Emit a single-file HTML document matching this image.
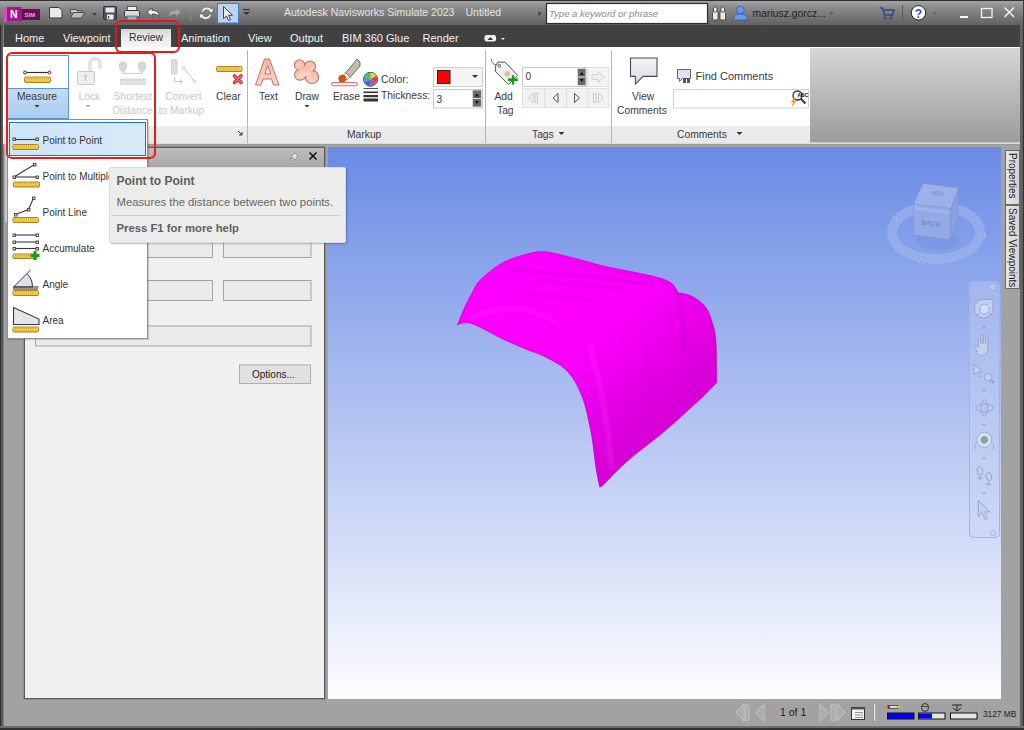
<!DOCTYPE html>
<html><head><meta charset="utf-8">
<style>
*{margin:0;padding:0;box-sizing:border-box}
html,body{width:1024px;height:730px;overflow:hidden;background:#2b2b2b;font-family:"Liberation Sans",sans-serif}
.a{position:absolute}
#title{left:0;top:0;width:1024px;height:25px;background:linear-gradient(#2e2e2e 0,#2e2e2e 1px,#a4a4a4 1px,#8a8a8a 8px,#626262 25px)}
#tabs{left:0;top:25px;width:1024px;height:22px;background:#414141}
#ribbon{left:3px;top:47px;width:1017px;height:96px;background:#fff}
#ribgray{left:810px;top:48px;width:210px;height:95px;background:linear-gradient(#d6d6d6 0,#9c9c9c 94px,#c8c8c8 94px)}
#foot{left:3px;top:126px;width:807px;height:17px;background:linear-gradient(#ededed,#e8e8e8)}
#main{left:4px;top:143px;width:1016px;height:583px;background:#a2a2a2}
#band{left:3px;top:143px;width:1017px;height:4px;background:linear-gradient(#dcdcdc 0,#dcdcdc 0.5px,#959595 1px,#a0a0a0 2px,#a8a8a8 4px)}
#lframe{left:0;top:25px;width:4px;height:705px;background:linear-gradient(90deg,#303030 0,#303030 1.2px,#555 1.5px,#5a5a5a 2.5px,#777 3px,#858585 4px)}
#rframe{left:1020px;top:25px;width:4px;height:705px;background:linear-gradient(90deg,#666 0,#5e5e5e 2.5px,#333 3px)}
#bframe{left:0;top:726px;width:1024px;height:4px;background:linear-gradient(#727272 0,#6a6a6a 2px,#363636 2.5px,#2e2e2e)}
#vp{left:328px;top:147px;width:673px;height:552px;background:linear-gradient(#6a8be5,#fdfdff)}
#panel{left:24px;top:147px;width:301px;height:552px;background:#f0f0f0;border:1px solid #5a5a5a;box-shadow:0 0 0 0.6px #808080}
#phead{left:0;top:0;width:299px;height:19px;background:linear-gradient(#bebebe,#a8a8a8)}
.txt{white-space:nowrap;color:#333}
</style></head><body>
<div id="title" class="a"></div>
<div class="a" style="left:1023px;top:0;width:1px;height:25px;background:#3a3a3a"></div>
<div id="tabs" class="a"></div>
<!-- TITLE BAR CONTENT -->
<svg class="a" style="left:0;top:0" width="1024" height="25">
 <polygon points="3.5,9 7,7 7,21 3.5,23" fill="#d94fb5"/>
 <rect x="7" y="7" width="14.5" height="14" fill="#a3168e"/>
 <rect x="21.5" y="9" width="18.5" height="11" fill="#6f0b55"/>
 <text x="10" y="18" font-family="Liberation Sans" font-weight="bold" font-size="10.5" fill="#fff">N</text>
 <text x="24.5" y="17" font-family="Liberation Sans" font-weight="bold" font-size="6" fill="#e0b8d8">SIM</text>
 <!-- new doc -->
 <path d="M49.5,7.5 h9.5 l3,3 v7.5 h-12.5z" fill="#e8eaee" stroke="#3a3a3a" stroke-width="1"/>
 <!-- open folder -->
 <path d="M70.5,9.5 h5 l1.5,1.5 h5 v2 h-11.5z" fill="#c8ccd4" stroke="#3a3a3a" stroke-width="0.8"/>
 <path d="M70.5,18 l3,-5.5 h11 l-3,5.5z" fill="#b8bec8" stroke="#3a3a3a" stroke-width="0.8"/>
 <path d="M92,13 h5 l-2.5,2.5z" fill="#3a3a3a"/>
 <!-- save -->
 <rect x="103.5" y="6.5" width="13" height="13" rx="1" fill="#4a5060" stroke="#2a2e38" stroke-width="1"/>
 <rect x="105.5" y="7.5" width="9" height="5" fill="#e8e8e8"/>
 <rect x="107" y="14.5" width="6.5" height="5" fill="#f0f0f0"/>
 <rect x="108" y="16" width="1.2" height="2.5" fill="#333"/>
 <!-- print -->
 <rect x="127.5" y="6.5" width="9" height="4" fill="#f0f0f0" stroke="#444" stroke-width="0.8"/>
 <rect x="124.5" y="10.5" width="15" height="6.5" rx="1" fill="#d8dadc" stroke="#333" stroke-width="1"/>
 <rect x="127" y="16" width="10" height="4" fill="#8ab0c8" stroke="#444" stroke-width="0.6"/>
 <!-- undo -->
 <path d="M147,12 l5,-4 v2.5 c4,0 7,1 7,6 c-1.5,-2 -3.5,-2.5 -7,-2.5 v2.5z" fill="#f4f4f4" stroke="#444" stroke-width="0.9"/>
 <!-- redo -->
 <path d="M181,12 l-5,-4 v2.5 c-4,0 -7,1 -7,6 c1.5,-2 3.5,-2.5 7,-2.5 v2.5z" fill="#a8a8a8" stroke="#888" stroke-width="0.6"/>
 <line x1="190.5" y1="5" x2="190.5" y2="21" stroke="#8a8a8a" stroke-width="1"/>
 <!-- refresh -->
 <path d="M201,12.5 a6,6 0 0 1 10.5,-3.5 l1.5,-1.5 v5 h-5 l1.6,-1.6 a4,4 0 0 0 -6.6,1.6z" fill="#f0f0f0" stroke="#555" stroke-width="0.6"/>
 <path d="M211.5,14 a6,6 0 0 1 -10.5,3.5 l-1.5,1.5 v-5 h5 l-1.6,1.6 a4,4 0 0 0 6.6,-1.6z" fill="#f0f0f0" stroke="#555" stroke-width="0.6"/>
 <!-- select -->
 <rect x="217.5" y="3.5" width="21" height="19.5" fill="#b8d4f0" stroke="#3a7ac8" stroke-width="1"/>
 <path d="M223.5,6.5 v12 l3,-2.5 l2,4.5 l2,-1 l-2,-4.2 h4z" fill="#e8ecf0" stroke="#333" stroke-width="0.9"/>
 <rect x="243" y="9" width="7" height="1.2" fill="#333"/>
 <path d="M243,12 h7 l-3.5,3z" fill="#333"/>
 <!-- search arrow -->
 <path d="M538.5,11 l3,2.5 l-3,2.5z" fill="#3a3a3a"/>
 <rect x="546.5" y="3.5" width="161" height="20" fill="#fff" stroke="#2e2e2e" stroke-width="1.2"/>
 <!-- binoculars -->
 <g fill="#e8e8e8" stroke="#333" stroke-width="0.8">
  <rect x="712.5" y="11" width="5.5" height="9" rx="1"/><rect x="720" y="11" width="5.5" height="9" rx="1"/>
  <rect x="713.5" y="7" width="3.5" height="5" rx="1"/><rect x="721" y="7" width="3.5" height="5" rx="1"/>
 </g>
 <!-- user -->
 <circle cx="740.5" cy="10" r="3.8" fill="#6a9ae8" stroke="#2a5ab8" stroke-width="0.8"/>
 <path d="M733.5,20 c0,-4 3,-6 7,-6 s7,2 7,6z" fill="#6a9ae8" stroke="#2a5ab8" stroke-width="0.8"/>
 <path d="M829.5,12.5 h4 l-2,2z" fill="#4a4a4a"/>
 <!-- cart -->
 <path d="M879.5,8 h3 l2,7 h8 l1.5,-5 h-10" fill="none" stroke="#2a4a8a" stroke-width="1.6"/>
 <circle cx="885" cy="18" r="1.5" fill="#2a4a8a"/><circle cx="891" cy="18" r="1.5" fill="#2a4a8a"/>
 <line x1="902.5" y1="5" x2="902.5" y2="21" stroke="#5a5a5a" stroke-width="1"/>
 <!-- help -->
 <circle cx="918.5" cy="12.8" r="7.2" fill="#fff" stroke="#222" stroke-width="1"/>
 <text x="914.8" y="17.5" font-family="Liberation Sans" font-weight="bold" font-size="12" fill="#2a50c8">?</text>
 <path d="M932.5,12.5 h4 l-2,2z" fill="#5a5a5a"/>
 <!-- window buttons -->
 <rect x="960" y="16" width="8" height="2" fill="#f4f4f4"/>
 <rect x="981.5" y="8.5" width="10.5" height="9" fill="none" stroke="#f4f4f4" stroke-width="1.3"/>
 <path d="M1004.5,7.5 l9.5,9.5 M1014,7.5 l-9.5,9.5" stroke="#f4f4f4" stroke-width="1.5"/>
</svg>
<div class="a txt" style="left:284px;top:6px;font-size:10.5px;color:#e4e4e4">Autodesk Navisworks Simulate 2023</div>
<div class="a txt" style="left:465.5px;top:6px;font-size:10.5px;color:#e4e4e4">Untitled</div>
<div class="a txt" style="left:549px;top:7.5px;font-size:9.5px;color:#8a8a8a;font-style:italic">Type a keyword or phrase</div>
<div class="a txt" style="left:752.5px;top:7.5px;font-size:10.4px;color:#1e1e1e">mariusz.gorcz...</div>


<!-- TABS -->
<div class="a" style="left:121px;top:29px;width:49.5px;height:18px;background:linear-gradient(#d4d4d4,#e8e8e8 40%,#f6f6f6)"></div>
<div class="a txt" style="left:15px;top:31.5px;font-size:11px;color:#f2f2f2">Home</div>
<div class="a txt" style="left:63px;top:31.5px;font-size:11px;color:#f2f2f2">Viewpoint</div>
<div class="a txt" style="left:129px;top:31.5px;font-size:10.4px;color:#2e2e2e">Review</div>
<div class="a txt" style="left:181px;top:31.5px;font-size:11px;color:#f2f2f2">Animation</div>
<div class="a txt" style="left:248px;top:31.5px;font-size:11px;color:#f2f2f2">View</div>
<div class="a txt" style="left:290px;top:31.5px;font-size:11px;color:#f2f2f2">Output</div>
<div class="a txt" style="left:342px;top:31.5px;font-size:11px;color:#f2f2f2">BIM 360 Glue</div>
<div class="a txt" style="left:422.5px;top:31.5px;font-size:11px;color:#f2f2f2">Render</div>
<svg class="a" style="left:480px;top:30px" width="30" height="15">
 <rect x="4.5" y="5" width="11.5" height="6.5" rx="2" fill="#f0f0f0"/>
 <path d="M7.5,10 l2.8,-3 l2.8,3z" fill="#333"/>
 <path d="M21,8 h4 l-2,2z" fill="#f0f0f0"/>
</svg>
<div id="lframe" class="a"></div>
<div id="rframe" class="a"></div>
<div id="main" class="a"></div>
<div id="band" class="a"></div>
<div class="a" style="left:3.5px;top:144px;width:4px;height:78px;background:linear-gradient(90deg,#8a8a8a,#c4c4c4 1px,#d0d0d0)"></div>
<div id="ribbon" class="a"></div>
<div id="foot" class="a"></div>
<div id="ribgray" class="a"></div>

<!-- RIBBON CONTENT -->
<div class="a" style="left:7px;top:55px;width:61.5px;height:64px;border:1px solid #5a94d4;background:linear-gradient(#ffffff 0,#ffffff 32px,#5a94d4 32px,#5a94d4 33px,#c4dcf4 33px,#a9cbee 100%)"></div>
<svg class="a" style="left:0;top:47px" width="810" height="96">
 <defs>
  <linearGradient id="rul" x1="0" y1="0" x2="0" y2="1"><stop offset="0" stop-color="#ffe676"/><stop offset="1" stop-color="#e8b820"/></linearGradient>
  <linearGradient id="pink" x1="0" y1="0" x2="0" y2="1"><stop offset="0" stop-color="#f4b8a4"/><stop offset="1" stop-color="#f8d8cc"/></linearGradient>
 </defs>
 <!-- measure icon -->
 <line x1="25" y1="25.5" x2="49.5" y2="25.5" stroke="#333" stroke-width="1.2"/>
 <circle cx="25" cy="25.5" r="1.5" fill="#ddd" stroke="#333" stroke-width="0.9"/>
 <circle cx="49.5" cy="25.5" r="1.5" fill="#ddd" stroke="#333" stroke-width="0.9"/>
 <rect x="24.5" y="30" width="26" height="5.5" rx="1.2" fill="url(#rul)" stroke="#a8741a" stroke-width="0.9"/><line x1="26.5" y1="31.8" x2="49" y2="31.8" stroke="#b88a20" stroke-width="1.6" stroke-dasharray="0.8,1.4"/>
 <path d="M34.5,58 h5 l-2.5,2.5z" fill="#333"/>
 <!-- lock (disabled) -->
 <path d="M90,24 v-7.5 a5,5 0 0 1 10,0 v5" fill="none" stroke="#d0d0d0" stroke-width="3"/>
 <path d="M90,24 v-7.5 a5,5 0 0 1 10,0 v5" fill="none" stroke="#f0f0f0" stroke-width="1.2"/>
 <rect x="77.5" y="24.5" width="17" height="13" rx="1" fill="#eeeeee" stroke="#c8c8c8" stroke-width="1"/>
 <circle cx="85.5" cy="29" r="1.3" fill="#c0c0c0"/><rect x="85" y="29" width="1.2" height="5" fill="#c0c0c0"/>
 <path d="M85.5,58 h5 l-2.5,2.5z" fill="#aaa"/>
 <!-- shortest distance (disabled) -->
 <path d="M123,26 c-3,-3 -3.8,-5.5 -3.8,-7.5 a3.8,3.8 0 0 1 7.6,0 c0,2 -0.8,4.5 -3.8,7.5z" fill="#d8d8d8" stroke="#cccccc" stroke-width="0.8"/>
 <path d="M142,26 c-3,-3 -3.8,-5.5 -3.8,-7.5 a3.8,3.8 0 0 1 7.6,0 c0,2 -0.8,4.5 -3.8,7.5z" fill="#d8d8d8" stroke="#cccccc" stroke-width="0.8"/>
 <path d="M123,26.5 h19" stroke="#cfcfcf" stroke-width="1"/>
 <rect x="120.5" y="32" width="25" height="5.5" fill="#e4e4e4" stroke="#d0d0d0" stroke-width="0.8"/><line x1="122.5" y1="33.6" x2="144" y2="33.6" stroke="#c8c8c8" stroke-width="1.4" stroke-dasharray="0.8,1.6"/>
 <!-- convert to markup (disabled) -->
 <rect x="171.5" y="12.5" width="5.5" height="14.5" rx="1" fill="#dcdcdc" stroke="#cacaca" stroke-width="0.8"/>
 <path d="M174.5,30 v4.5 h6" fill="none" stroke="#c8c8c8" stroke-width="1.2"/>
 <path d="M180,32 l3,2.5 l-3,2.5z" fill="#c8c8c8"/>
 <line x1="183.5" y1="20.5" x2="194.5" y2="34.5" stroke="#cfcfcf" stroke-width="1.2"/>
 <rect x="182.5" y="19.5" width="2" height="2" fill="#fff" stroke="#c8c8c8" stroke-width="0.7"/>
 <rect x="193.5" y="33.5" width="2" height="2" fill="#fff" stroke="#c8c8c8" stroke-width="0.7"/>
 <!-- clear -->
 <rect x="216.5" y="19.5" width="25.5" height="5" rx="1" fill="url(#rul)" stroke="#a8741a" stroke-width="0.9"/><line x1="218.5" y1="21.2" x2="240.5" y2="21.2" stroke="#b88a20" stroke-width="1.6" stroke-dasharray="0.8,1.4"/>
 <path d="M234.5,29 l6.5,6.5 M241,29 l-6.5,6.5" stroke="#a83030" stroke-width="3.6" stroke-linecap="round"/>
 <path d="M234.5,29 l6.5,6.5 M241,29 l-6.5,6.5" stroke="#f06060" stroke-width="2" stroke-linecap="round"/>
 <line x1="247.5" y1="3" x2="247.5" y2="96" stroke="#b4b4b4" stroke-width="1"/>
 <!-- Text A -->
 <path d="M255.5,38 l9,-26 h5 l9.5,26 h-5.5 l-2,-6 h-8.5 l-2,6z M265,27 h5.5 l-2.8,-8.5z" fill="url(#pink)" stroke="#c46c64" stroke-width="1" fill-rule="evenodd"/>
 <!-- Draw cloud -->
 <g fill="#b86a64"><circle cx="299.5" cy="17.9" r="5.6"/><circle cx="310" cy="19.5" r="6.1"/><circle cx="300.2" cy="27.7" r="6.1"/><circle cx="312" cy="30" r="7.1"/></g>
 <g fill="url(#pink)"><circle cx="299.5" cy="17.9" r="4.6"/><circle cx="310" cy="19.5" r="5.1"/><circle cx="300.2" cy="27.7" r="5.1"/><circle cx="312" cy="30" r="6.1"/><rect x="299" y="19" width="12" height="10"/></g>
 <path d="M304.5,58 h5 l-2.5,2.5z" fill="#333"/>
 <!-- Erase brush -->
 <path d="M345.5,26 l11.5,-14 l3,3 v4 l-10.5,12z" fill="#c4bca8" stroke="#555" stroke-width="0.8"/>
 <path d="M342.5,29 l3,-3.5 l4.5,4.5 l-3,3z" fill="#e8e8e8" stroke="#555" stroke-width="0.6"/>
 <circle cx="342.3" cy="31.6" r="3.6" fill="#e8500a" stroke="#8a3a10" stroke-width="0.5"/>
 <rect x="331.5" y="35.5" width="26" height="3.3" rx="1.6" fill="#fae8e8" stroke="#b85a5a" stroke-width="0.8"/>
 <!-- color wheel -->
 <circle cx="370.5" cy="32.3" r="7" fill="#ddd" stroke="#444" stroke-width="1"/>
 <path d="M370.5,32.3 l0,-6.5 a6.5,6.5 0 0 1 5.6,3.25z" fill="#e0d840"/>
 <path d="M370.5,32.3 l5.6,-3.25 a6.5,6.5 0 0 1 0,6.5z" fill="#e04040"/>
 <path d="M370.5,32.3 l5.6,3.25 a6.5,6.5 0 0 1 -5.6,3.25z" fill="#b050b0"/>
 <path d="M370.5,32.3 l0,6.5 a6.5,6.5 0 0 1 -5.6,-3.25z" fill="#4060e0"/>
 <path d="M370.5,32.3 l-5.6,3.25 a6.5,6.5 0 0 1 0,-6.5z" fill="#40a0e0"/>
 <path d="M370.5,32.3 l-5.6,-3.25 a6.5,6.5 0 0 1 5.6,-3.25z" fill="#50c050"/>
 <!-- thickness -->
 <rect x="363.5" y="41" width="14.5" height="1" fill="#555"/>
 <rect x="363.5" y="44.5" width="14.5" height="1.6" fill="#333"/>
 <rect x="363.5" y="48" width="14.5" height="2.2" fill="#333"/>
 <rect x="363.5" y="51.5" width="14.5" height="3" fill="#333"/>
 <!-- color dropdown -->
 <rect x="433.5" y="20.5" width="49" height="19" fill="#f4f4f4" stroke="#d0d0d0" stroke-width="1"/>
 <rect x="437.5" y="23.5" width="12.5" height="13" fill="#ff0000" stroke="#222" stroke-width="1"/>
 <path d="M472,28 h6 l-3,3z" fill="#333"/>
 <!-- thickness spin -->
 <rect x="433.5" y="42.5" width="49" height="18.5" fill="#fff" stroke="#c8c8c8" stroke-width="1"/>
 <rect x="472" y="43" width="10" height="17.5" fill="#d8d8d8"/>
 <rect x="473" y="43.5" width="8" height="7.5" fill="#6a6a6a"/>
 <rect x="473" y="52" width="8" height="7.5" fill="#6a6a6a"/>
 <path d="M475,49.5 h4 l-2,-3z M475,54 h4 l-2,3z" fill="#111"/>
 <line x1="485.5" y1="3" x2="485.5" y2="96" stroke="#b4b4b4" stroke-width="1"/>
 <!-- add tag -->
 <path d="M491.2,11.7 c0.5,3 1.5,5 3,5.5 s3,1 5,1.5" fill="none" stroke="#555" stroke-width="0.9"/>
 <path d="M497.8,15.1 h7.2 l12.8,13.4 l-9.4,9.1 l-13,-13.1 v-5.4z" fill="#eceef2" stroke="#444" stroke-width="0.9"/>
 <circle cx="499.2" cy="18.8" r="1.4" fill="#ddd" stroke="#555" stroke-width="0.8"/>
 <path d="M507.2,23.3 l3.5,3.4 l-3,3.5 l-3.9,-3z" fill="#f0b4a0"/>
 <rect x="511.9" y="28.2" width="2.3" height="9.4" fill="#10a010"/>
 <rect x="508" y="31.4" width="9.8" height="2.7" fill="#10a010"/>
 <!-- tag input -->
 <rect x="522.5" y="20.5" width="64.5" height="19" fill="#fff" stroke="#c8c8c8" stroke-width="1"/>
 <rect x="577" y="21" width="9.5" height="18" fill="#d8d8d8"/>
 <rect x="578" y="22" width="7.5" height="7.5" fill="#6a6a6a"/>
 <rect x="578" y="30.5" width="7.5" height="7.5" fill="#6a6a6a"/>
 <path d="M579.8,28 h4 l-2,-3z M579.8,32 h4 l-2,3z" fill="#111"/>
 <rect x="588" y="20.5" width="21" height="19" fill="#f4f4f4" stroke="#e0e0e0" stroke-width="1"/>
 <path d="M592,27.5 h6 v-3 l6,5.5 l-6,5.5 v-3 h-6z" fill="#f0f0f0" stroke="#c8c8c8" stroke-width="0.8"/>
 <!-- nav buttons -->
 <rect x="522.5" y="41.5" width="86.5" height="19" fill="#f2f2f2" stroke="#e0e0e0" stroke-width="1"/>
 <line x1="544.5" y1="42" x2="544.5" y2="60.5" stroke="#e0e0e0"/>
 <line x1="566.5" y1="42" x2="566.5" y2="60.5" stroke="#e0e0e0"/>
 <line x1="588.5" y1="42" x2="588.5" y2="60.5" stroke="#e0e0e0"/>
 <path d="M533,46.5 l-4.5,4.5 l4.5,4.5z" fill="#f4f4f4" stroke="#c4c4c4" stroke-width="0.9"/>
 <rect x="535" y="46.5" width="2.5" height="9" fill="#f4f4f4" stroke="#c4c4c4" stroke-width="0.9"/>
 <path d="M558,46.5 l-5,4.5 l5,4.5z" fill="#f4f4f4" stroke="#555" stroke-width="1"/>
 <path d="M574.5,46.5 l5,4.5 l-5,4.5z" fill="#f4f4f4" stroke="#555" stroke-width="1"/>
 <rect x="593.5" y="46.5" width="2.5" height="9" fill="#f4f4f4" stroke="#c4c4c4" stroke-width="0.9"/>
 <path d="M598.5,46.5 l4.5,4.5 l-4.5,4.5z" fill="#f4f4f4" stroke="#c4c4c4" stroke-width="0.9"/>
 <line x1="611.5" y1="3" x2="611.5" y2="96" stroke="#b4b4b4" stroke-width="1"/>
 <!-- view comments bubble -->
 <defs><linearGradient id="bub" x1="0" y1="0" x2="0" y2="1"><stop offset="0" stop-color="#f4f5f8"/><stop offset="1" stop-color="#d8dbe2"/></linearGradient></defs><path d="M630.5,11 h26.5 v18.4 h-14 l-7.6,7.8 v-7.8 h-4.9z" fill="url(#bub)" stroke="#4a4a4a" stroke-width="1.1" stroke-linejoin="round"/>
 <!-- find comments icon -->
 <path d="M677.5,22.5 h13 v9 h-8 l-3,3 v-3 h-2z" fill="#e0e4ea" stroke="#555" stroke-width="0.9"/>
 <rect x="683" y="31" width="3" height="5" fill="#3a5a9a"/><rect x="687" y="31" width="3" height="5" fill="#3a5a9a"/>
 <!-- search box -->
 <rect x="673.5" y="42.5" width="135" height="18.5" fill="#fff" stroke="#d0d0d0" stroke-width="1"/>
 <circle cx="797.5" cy="48.5" r="4.5" fill="#f4f4f4" stroke="#333" stroke-width="1.3"/>
 <line x1="800.5" y1="51.5" x2="805.5" y2="56.5" stroke="#444" stroke-width="2.4"/>
 <path d="M795,51 l-3,3.5 h3 l-3,4" fill="none" stroke="#f0a010" stroke-width="1.3"/>
 <text x="797.5" y="50" font-family="Liberation Sans" font-size="5" font-weight="bold" fill="#111">ABC</text>
 <!-- dialog launcher -->
 <path d="M238,84 l4,4 M242,85 v3 h-3" stroke="#333" stroke-width="1" fill="none"/>
 <path d="M558.5,85 h6 l-3,3z" fill="#333"/>
 <path d="M736.5,85 h6 l-3,3z" fill="#333"/>
</svg>
<div class="a txt" style="left:17px;top:90.5px;font-size:10.3px;color:#3a3a3a">Measure</div>
<div class="a txt" style="left:78.5px;top:90.5px;font-size:10.3px;color:#c8c8c8">Lock</div>
<div class="a txt" style="left:113.5px;top:90.5px;font-size:10.3px;color:#c8c8c8">Shortest</div>
<div class="a txt" style="left:112.5px;top:104.5px;font-size:10.3px;color:#c8c8c8">Distance</div>
<div class="a txt" style="left:165.5px;top:90.5px;font-size:10.3px;color:#c8c8c8">Convert</div>
<div class="a txt" style="left:158.5px;top:104.5px;font-size:10.3px;color:#c8c8c8">to Markup</div>
<div class="a txt" style="left:216px;top:90.5px;font-size:10.3px;color:#3a3a3a">Clear</div>
<div class="a txt" style="left:259px;top:90.5px;font-size:10.3px;color:#3a3a3a">Text</div>
<div class="a txt" style="left:295px;top:90.5px;font-size:10.3px;color:#3a3a3a">Draw</div>
<div class="a txt" style="left:333px;top:90.5px;font-size:10.3px;color:#3a3a3a">Erase</div>
<div class="a txt" style="left:381px;top:73.5px;font-size:10.3px;color:#3a3a3a">Color:</div>
<div class="a txt" style="left:381px;top:89.5px;font-size:10.3px;color:#3a3a3a">Thickness:</div>
<div class="a txt" style="left:436.5px;top:93.5px;font-size:10.3px;color:#3a3a3a">3</div>
<div class="a txt" style="left:525.5px;top:71px;font-size:10.3px;color:#3a3a3a">0</div>
<div class="a txt" style="left:494.5px;top:90.5px;font-size:10.3px;color:#3a3a3a">Add</div>
<div class="a txt" style="left:497px;top:104.5px;font-size:10.3px;color:#3a3a3a">Tag</div>
<div class="a txt" style="left:632px;top:90.5px;font-size:10.3px;color:#3a3a3a">View</div>
<div class="a txt" style="left:617px;top:104.5px;font-size:10.3px;color:#3a3a3a">Comments</div>
<div class="a txt" style="left:695.5px;top:69.5px;font-size:11px;color:#3a3a3a">Find Comments</div>
<div class="a txt" style="left:347px;top:128.5px;font-size:10.3px;color:#3a3a3a">Markup</div>
<div class="a txt" style="left:532px;top:128.5px;font-size:10.3px;color:#3a3a3a">Tags</div>
<div class="a txt" style="left:677px;top:128.5px;font-size:10.3px;color:#3a3a3a">Comments</div>
<div id="vp" class="a"></div>

<!-- VIEWPORT CONTENT -->
<svg class="a" style="left:0;top:0" width="1024" height="730">
 <defs>
  <linearGradient id="mag" x1="0" y1="0" x2="1" y2="1">
   <stop offset="0" stop-color="#ff00ff"/><stop offset="0.45" stop-color="#fc00fc"/><stop offset="0.72" stop-color="#da00da"/><stop offset="1" stop-color="#d200d2"/>
  </linearGradient>
 </defs>
 <filter id="blr" x="-10%" y="-10%" width="120%" height="120%"><feGaussianBlur stdDeviation="1"/></filter><clipPath id="shclip"><path d="M457,325.5 C457.0,325.5 461.6,313.4 464,308 C466.4,302.6 468.7,298.1 471.4,293.4 C474.1,288.7 475.1,285.0 480,280 C484.9,275.0 493.7,267.6 500.5,263.5 C507.3,259.4 513.8,257.4 521,255.3 C528.2,253.2 535.1,250.9 543.6,251.2 C552.1,251.5 562.4,254.9 572.3,257.3 C582.2,259.7 592.8,263.1 603,265.5 C613.2,267.9 624.2,269.6 633.8,271.7 C643.4,273.8 654.0,275.8 660.5,277.8 C667.0,279.9 669.9,281.6 672.8,284 C675.7,286.4 677.9,292.2 677.9,292.2 C677.9,292.2 687.5,293.4 692.2,296 C697.0,298.6 702.9,302.8 706.4,307.7 C709.9,312.6 711.8,319.5 713.5,325.4 C715.2,331.3 715.8,333.8 716.4,343.3 C717.0,352.8 717.0,382.5 717,382.5 C717.0,382.5 708.3,392.0 699.4,400.3 C690.5,408.6 675.6,422.2 663.7,432.3 C651.8,442.4 638.1,451.9 628,460.8 C617.9,469.7 603.0,485.7 603,485.7 C603.0,485.7 599.6,487.5 599.6,487.5 C599.6,487.5 597.5,479.2 596,470 C594.5,460.8 593.1,444.5 590.7,432.3 C588.3,420.1 585.7,406.8 581.8,396.7 C577.9,386.6 573.5,378.3 567.5,371.8 C561.5,365.3 552.5,361.1 546,357.5 C539.5,353.9 535.5,353.4 528.4,350.4 C521.3,347.4 512.9,344.1 503.4,339.7 C493.9,335.2 479.1,326.1 471.4,323.7 C463.7,321.3 457.0,325.5 457,325.5Z"/></clipPath>
 <path d="M457,325.5 C457.0,325.5 461.6,313.4 464,308 C466.4,302.6 468.7,298.1 471.4,293.4 C474.1,288.7 475.1,285.0 480,280 C484.9,275.0 493.7,267.6 500.5,263.5 C507.3,259.4 513.8,257.4 521,255.3 C528.2,253.2 535.1,250.9 543.6,251.2 C552.1,251.5 562.4,254.9 572.3,257.3 C582.2,259.7 592.8,263.1 603,265.5 C613.2,267.9 624.2,269.6 633.8,271.7 C643.4,273.8 654.0,275.8 660.5,277.8 C667.0,279.9 669.9,281.6 672.8,284 C675.7,286.4 677.9,292.2 677.9,292.2 C677.9,292.2 687.5,293.4 692.2,296 C697.0,298.6 702.9,302.8 706.4,307.7 C709.9,312.6 711.8,319.5 713.5,325.4 C715.2,331.3 715.8,333.8 716.4,343.3 C717.0,352.8 717.0,382.5 717,382.5 C717.0,382.5 708.3,392.0 699.4,400.3 C690.5,408.6 675.6,422.2 663.7,432.3 C651.8,442.4 638.1,451.9 628,460.8 C617.9,469.7 603.0,485.7 603,485.7 C603.0,485.7 599.6,487.5 599.6,487.5 C599.6,487.5 597.5,479.2 596,470 C594.5,460.8 593.1,444.5 590.7,432.3 C588.3,420.1 585.7,406.8 581.8,396.7 C577.9,386.6 573.5,378.3 567.5,371.8 C561.5,365.3 552.5,361.1 546,357.5 C539.5,353.9 535.5,353.4 528.4,350.4 C521.3,347.4 512.9,344.1 503.4,339.7 C493.9,335.2 479.1,326.1 471.4,323.7 C463.7,321.3 457.0,325.5 457,325.5Z" fill="url(#mag)"/>
 <g clip-path="url(#shclip)"><g filter="url(#blr)">
  <path d="M457,325.5 C457.0,325.5 461.6,313.4 464,308 C466.4,302.6 468.7,298.1 471.4,293.4 C474.1,288.7 475.1,285.0 480,280 C484.9,275.0 493.7,267.6 500.5,263.5 C507.3,259.4 513.8,257.4 521,255.3 C528.2,253.2 535.1,250.9 543.6,251.2 C552.1,251.5 562.4,254.9 572.3,257.3 C582.2,259.7 592.8,263.1 603,265.5 C613.2,267.9 624.2,269.6 633.8,271.7 C643.4,273.8 654.0,275.8 660.5,277.8 C667.0,279.9 669.9,281.6 672.8,284 C675.7,286.4 677.9,292.2 677.9,292.2 C677.9,292.2 687.5,293.4 692.2,296 C697.0,298.6 702.9,302.8 706.4,307.7 C709.9,312.6 711.8,319.5 713.5,325.4 C715.2,331.3 715.8,333.8 716.4,343.3 C717.0,352.8 717.0,382.5 717,382.5 C717.0,382.5 708.3,392.0 699.4,400.3 C690.5,408.6 675.6,422.2 663.7,432.3 C651.8,442.4 638.1,451.9 628,460.8 C617.9,469.7 603.0,485.7 603,485.7 C603.0,485.7 599.6,487.5 599.6,487.5 C599.6,487.5 597.5,479.2 596,470 C594.5,460.8 593.1,444.5 590.7,432.3 C588.3,420.1 585.7,406.8 581.8,396.7 C577.9,386.6 573.5,378.3 567.5,371.8 C561.5,365.3 552.5,361.1 546,357.5 C539.5,353.9 535.5,353.4 528.4,350.4 C521.3,347.4 512.9,344.1 503.4,339.7 C493.9,335.2 479.1,326.1 471.4,323.7 C463.7,321.3 457.0,325.5 457,325.5Z" fill="none" stroke="#a800a8" stroke-width="2" opacity="0.35"/>
  <path d="M510.8,269.6 C540,272 560,274 582.5,275.8 S630,282 654.3,286" stroke="#a000a0" stroke-width="2" fill="none" opacity="0.35"/>
  <path d="M521,292.2 C550,296 575,298 594.8,300.4" stroke="#a000a0" stroke-width="1.8" fill="none" opacity="0.3"/>
  <path d="M531.3,279.9 C570,284 600,286 623.6,289" stroke="#a000a0" stroke-width="1.8" fill="none" opacity="0.3"/>
  <path d="M560,262 C600,268 640,276 668,284" stroke="#a000a0" stroke-width="1.5" fill="none" opacity="0.3"/>
  <path d="M676,288 C681,310 684,330 684,350" stroke="#a000a0" stroke-width="2.5" fill="none" opacity="0.35"/>
  <path d="M662,282 C668,300 672,320 672,345" stroke="#b000b0" stroke-width="1.5" fill="none" opacity="0.25"/>
  <path d="M470,318 C500,305 530,305 555,322" stroke="#ff60ff" stroke-width="5" fill="none" opacity="0.15"/>
  <path d="M590,345 C600,385 608,420 612,470" stroke="#ff50ff" stroke-width="6" fill="none" opacity="0.18"/>
  <path d="M640,320 C650,360 655,400 650,440" stroke="#b000b0" stroke-width="1.5" fill="none" opacity="0.2"/>
  <path d="M620,330 C628,370 632,410 630,455" stroke="#b000b0" stroke-width="1.2" fill="none" opacity="0.18"/>
  <path d="M690,330 C695,360 697,380 695,400" stroke="#b000b0" stroke-width="1.2" fill="none" opacity="0.2"/>
 </g></g>
 <!-- ViewCube -->
 <ellipse cx="936" cy="232.5" rx="44" ry="26.5" fill="none" stroke="#a8bcf0" stroke-width="10" opacity="0.5"/>
 <ellipse cx="936" cy="232.5" rx="49" ry="31.5" fill="none" stroke="#8ea4e0" stroke-width="0.6" opacity="0.5"/>
 <ellipse cx="936" cy="232.5" rx="39" ry="21.5" fill="none" stroke="#8ea4e0" stroke-width="0.6" opacity="0.5"/>
 <ellipse cx="938" cy="241" rx="22" ry="9" fill="#5a7ad0" opacity="0.18"/>
 <path d="M913.5,204 L923,183.5 L958.5,188 L951,208.5 Z" fill="#9cb1ea" stroke="#7a8cc0" stroke-width="0.6" stroke-dasharray="2.5,1.5"/>
 <path d="M913.5,204 L951,208.5 L950.5,240 L914,235 Z" fill="#93a9e8" stroke="#7a8cc0" stroke-width="0.6" stroke-dasharray="2.5,1.5"/>
 <path d="M915,207 L949,211 L949,214 L915,210 Z" fill="#a6baee" opacity="0.7"/>
 <path d="M951,208.5 L958.5,188 L957.5,219 L950.5,240 Z" fill="#89a1e4" stroke="#7a8cc0" stroke-width="0.6" stroke-dasharray="2.5,1.5"/>
 <text x="921.5" y="226" font-family="Liberation Sans" font-size="7" fill="#7080b4" transform="rotate(6 932 223)">BACK</text>
 <text x="938" y="195" text-anchor="middle" font-family="Liberation Sans" font-size="6" fill="#7484b8" transform="rotate(184 938 193)">TOP</text>
 <g font-family="Liberation Sans" font-weight="bold" fill="#b4c6f4" stroke="#8aa0dc" stroke-width="0.5" opacity="0.9">
  <text x="889" y="224" font-size="9" transform="rotate(172 893.7 220.2)">E</text>
  <text x="976.5" y="239" font-size="10" transform="rotate(-18 982 235)">W</text>
  <text x="918.5" y="265" font-size="10" transform="rotate(12 923.8 260.6)">N</text>
 </g>
 <!-- Nav bar -->
 <rect x="969.5" y="281.5" width="30" height="256" rx="4" fill="#c8d4f4" fill-opacity="0.35" stroke="#a4b4e0" stroke-width="1"/>
 <g fill="#c4d0f0" stroke="#92a2cc" stroke-width="0.9">
  <path d="M984.4,299.4 h8.5 v9.7 a9.2,9.2 0 1 1 -8.5,-9.7z"/>
  <circle cx="984.4" cy="309.1" r="5" fill="#d0dcf6"/><path d="M980.5,312.5 l-4,4 M988.3,312.5 l4,4" fill="none"/>
  <path d="M977.5,351 l-3.5,-4 c-1,-1.2 0.5,-2.8 1.8,-1.8 l2.5,2 v-8.5 c0,-1.6 2.4,-1.6 2.4,0 v5 v-7.5 c0,-1.6 2.4,-1.6 2.4,0 v7.5 v-6.5 c0,-1.6 2.4,-1.6 2.4,0 v7 v-4.5 c0,-1.6 2.4,-1.6 2.4,0 v8 c0,4.5 -2.5,8 -6.5,8 c-2.5,0 -4,-1.2 -6,-3.7z"/>
  <path d="M974,364 v11 l2.8,-2.5 l2.2,4.5 l1.6,-0.8 l-2.2,-4.5 h3.8z"/>
  <circle cx="988.3" cy="377.2" r="3.8"/>
  <path d="M990.8,380 l3.2,3.2" stroke-width="2"/>
  <ellipse cx="984.3" cy="408" rx="8.5" ry="4" fill="none"/>
  <ellipse cx="984.3" cy="408" rx="3" ry="8.5" fill="none"/>
  <path d="M976,449 c-2,-2 -1.5,-5 0.5,-6 M992.5,449 c2,-2 1.5,-5 -0.5,-6" fill="none"/>
  <circle cx="984.3" cy="439.8" r="7.5" fill="#d8e2f8"/>
  <circle cx="984.3" cy="439.8" r="3.6" fill="#8aa49c" stroke="#9aaab8"/>
  <ellipse cx="979.9" cy="471" rx="2.8" ry="4.2" transform="rotate(-15 979.9 471)"/>
  <ellipse cx="988.8" cy="476.5" rx="2.8" ry="4.2" transform="rotate(-15 988.8 476.5)"/>
  <ellipse cx="980" cy="478" rx="2" ry="1.2"/>
  <ellipse cx="988.4" cy="484.3" rx="2" ry="1.2"/>
  <path d="M978.3,500.4 v16 l3.8,-3.5 l3,6.5 l2.5,-1.2 l-3,-6.3 h5.5z"/>
 </g>
 <g fill="#92a2cc">
  <path d="M982,326.5 h4 l-2,2.2z M982,389.8 h4 l-2,2.2z M982,424 h4 l-2,2.2z M982,457.6 h4 l-2,2.2z M982,492.4 h4 l-2,2.2z"/>
 </g>
 <circle cx="993.1" cy="286.8" r="2.6" fill="#d0dcf6" stroke="#9aa8d0" stroke-width="0.8"/>
 <path d="M991.8,285.5 l2.6,2.6 M994.4,285.5 l-2.6,2.6" stroke="#9aa8d0" stroke-width="0.6"/>
 <circle cx="992.8" cy="533" r="2.6" fill="#d0dcf6" stroke="#9aa8d0" stroke-width="0.8"/>
</svg>
<!-- right tabs -->
<div class="a" style="left:1004.5px;top:150px;width:15.5px;height:54.5px;background:linear-gradient(90deg,#e8e8e8,#d4d4d4);border:1px solid #6a6a6a"></div>
<div class="a" style="left:1004.5px;top:204.5px;width:15.5px;height:84px;background:linear-gradient(90deg,#e8e8e8,#d4d4d4);border:1px solid #6a6a6a"></div>
<div class="a txt" style="left:1006.5px;top:152.5px;font-size:10px;color:#1a1a1a;writing-mode:vertical-rl">Properties</div>
<div class="a txt" style="left:1006.5px;top:208px;font-size:10px;color:#1a1a1a;writing-mode:vertical-rl">Saved Viewpoints</div>
<!-- status bar -->
<svg class="a" style="left:720px;top:699px" width="304" height="27">
 <g fill="#acacac" stroke="#bdbdbd" stroke-width="1.2">
  <path d="M24,5 l-8,8.5 l8,8.5z"/><rect x="25" y="5.5" width="4" height="16" rx="1"/>
  <path d="M44,5 l-8,8.5 l8,8.5z"/>
  <path d="M100,5 l8,8.5 l-8,8.5z"/>
  <rect x="111" y="5.5" width="4" height="16" rx="1"/><path d="M117,5 l8,8.5 l-8,8.5z"/>
 </g>
 <rect x="131.5" y="8.5" width="13" height="12" fill="#f4f4f4" stroke="#333" stroke-width="1"/>
 <rect x="131.5" y="8.5" width="13" height="2" fill="#555"/>
 <path d="M135,13.5 h8 M135,16 h8 M135,18.5 h8" stroke="#777" stroke-width="0.8"/>
 <line x1="154.5" y1="5" x2="154.5" y2="22" stroke="#f0f0f0" stroke-width="1"/>
 <line x1="153.5" y1="5" x2="153.5" y2="22" stroke="#888" stroke-width="0.6"/>
 <rect x="167.5" y="14" width="26.5" height="6" fill="#0000ff" stroke="#111" stroke-width="1"/>
 <rect x="198.5" y="14" width="26.5" height="6" fill="#e4e4e4" stroke="#111" stroke-width="1"/>
 <rect x="199" y="14.5" width="13" height="5" fill="#0000ff"/>
 <rect x="230.5" y="14" width="26.5" height="6" fill="#e4e4e4" stroke="#111" stroke-width="1"/>
 <rect x="168" y="6.5" width="10" height="3" fill="#ddd" stroke="#333" stroke-width="0.7"/>
 <rect x="168" y="6.5" width="2" height="3" fill="#c02020"/>
 <path d="M178,6.5 l3,1.5 l-3,1.5z" fill="#e0d020"/>
 <ellipse cx="205" cy="8.5" rx="3.5" ry="4" fill="none" stroke="#222" stroke-width="0.9"/>
 <line x1="201.5" y1="7.5" x2="208.5" y2="7.5" stroke="#222" stroke-width="0.7"/>
 <g stroke="#222" stroke-width="1" fill="none"><path d="M232,6 h10 M237,6 v6 M233,9 l4,3 l4,-3"/></g>
</svg>
<div class="a txt" style="left:780px;top:706px;font-size:10.5px;color:#1a1a1a">1 of 1</div>
<div class="a txt" style="left:983px;top:709px;font-size:8.3px;color:#222">3127 MB</div>
<div id="panel" class="a"><div id="phead" class="a"></div></div>

<!-- PANEL CONTENT -->
<svg class="a" style="left:23px;top:147px" width="304" height="554">
 <path d="M268,9 l4,-3 l3,3 l-3,4z" fill="#e0e0e0" stroke="#777" stroke-width="0.7"/>
 <line x1="265" y1="14" x2="269" y2="10" stroke="#888" stroke-width="0.8"/>
 <path d="M286.5,5.5 l7,7 M293.5,5.5 l-7,7" stroke="#111" stroke-width="1.6"/>
 <g fill="#ebebeb" stroke="#a4a4a4" stroke-width="1">
  <rect x="12.5" y="92.5" width="177" height="18"/>
  <rect x="200.5" y="92.5" width="87.5" height="18"/>
  <rect x="12.5" y="133.5" width="177" height="20"/>
  <rect x="200.5" y="133.5" width="87.5" height="20"/>
  <rect x="12.5" y="179" width="275.5" height="20"/>
 </g>
 <rect x="216.5" y="218" width="71" height="18.5" fill="#e1e1e1" stroke="#adadad" stroke-width="1"/>
</svg>
<div class="a txt" style="left:252px;top:368.5px;font-size:10px;color:#222">Options...</div>
<div id="bframe" class="a"></div>


<!-- MENU -->
<div class="a" style="left:7px;top:119px;width:141px;height:220px;background:#fff;border:1px solid #8e8e8e;box-shadow:1px 1px 1px rgba(0,0,0,0.15)"></div>
<div class="a" style="left:9px;top:122px;width:137px;height:34px;background:linear-gradient(90deg,#cfe5f8,#d6e9f9);border:1px solid #2a6cc4"></div>
<svg class="a" style="left:0;top:119px" width="150" height="220">
 <defs><linearGradient id="rul2" x1="0" y1="0" x2="0" y2="1"><stop offset="0" stop-color="#ffe676"/><stop offset="1" stop-color="#e8b820"/></linearGradient></defs>
 <g stroke="#3a3a3a" stroke-width="1.1" fill="#ddd">
  <!-- p2p -->
  <line x1="14" y1="20.5" x2="37.5" y2="20.5"/>
  <!-- p2multi -->
  <line x1="14" y1="58" x2="37.5" y2="58"/><line x1="14" y1="58" x2="34.5" y2="45.5"/>
  <!-- pointline -->
  <polyline points="15.5,95.5 28.5,90.5 33.5,79" fill="none"/>
  <!-- accumulate -->
  <line x1="14" y1="116" x2="37.5" y2="116"/><line x1="14" y1="123" x2="37.5" y2="123"/><line x1="14" y1="129.5" x2="37.5" y2="129.5"/>
  <!-- angle -->
  <line x1="13" y1="170" x2="38" y2="170"/>
 </g>
 <path d="M13.5,168 L27,154.5 A19,19 0 0 1 32.5,168 Z" fill="#dcdfe6" stroke="#3a3a3a" stroke-width="1"/><line x1="27" y1="154.5" x2="30.5" y2="151" stroke="#3a3a3a" stroke-width="1"/><line x1="13" y1="168" x2="38.5" y2="168" stroke="#3a3a3a" stroke-width="1.1"/>
 <path d="M13.5,188.5 l25.5,11.5 v5.5 h-25.5z" fill="#e2e5ea" stroke="#3a3a3a" stroke-width="1.1"/>
 <g fill="#e8e8e8" stroke="#3a3a3a" stroke-width="0.9">
  <rect x="13" y="19" width="2.5" height="2.5"/><rect x="36" y="19" width="2.5" height="2.5"/>
  <rect x="13" y="57" width="2.5" height="2.5"/><rect x="36" y="57" width="2.5" height="2.5"/><rect x="33.5" y="44.5" width="2.5" height="2.5"/>
  <rect x="14.5" y="94.5" width="2.5" height="2.5"/><rect x="27.5" y="89.5" width="2.5" height="2.5"/><rect x="32.5" y="78" width="2.5" height="2.5"/>
  <rect x="13" y="115" width="2.5" height="2.5"/><rect x="36" y="115" width="2.5" height="2.5"/>
  <rect x="13" y="122" width="2.5" height="2.5"/><rect x="36" y="122" width="2.5" height="2.5"/>
  <rect x="13" y="128.5" width="2.5" height="2.5"/><rect x="36" y="128.5" width="2.5" height="2.5"/>
 </g>
 <g fill="url(#rul2)" stroke="#a8741a" stroke-width="0.9">
  <rect x="13" y="25.5" width="25.5" height="5" rx="1"/>
  <rect x="13.5" y="63" width="26" height="5" rx="1"/>
  <rect x="13" y="98.5" width="25.5" height="5" rx="1"/>
  <rect x="13" y="135" width="24" height="4.5" rx="1"/>
  <rect x="13" y="171.5" width="25.5" height="5" rx="1"/>
  <rect x="13" y="208" width="25.5" height="5" rx="1"/>
 </g>
 <g stroke="#b88a20" stroke-width="1.5" stroke-dasharray="0.8,1.4">
  <line x1="15" y1="27" x2="37" y2="27"/><line x1="15.5" y1="64.5" x2="38" y2="64.5"/><line x1="15" y1="100" x2="37" y2="100"/>
  <line x1="15" y1="136.4" x2="30" y2="136.4"/><line x1="15" y1="173" x2="37" y2="173"/><line x1="15" y1="209.5" x2="37" y2="209.5"/>
 </g>
 <path d="M35,132 v9 M30.5,136.5 h9" stroke="#18a018" stroke-width="3"/>
</svg>
<div class="a txt" style="left:42.5px;top:135px;font-size:10px;color:#333">Point to Point</div>
<div class="a txt" style="left:42.5px;top:171px;font-size:10px;color:#333">Point to Multiple</div>
<div class="a txt" style="left:42.5px;top:207px;font-size:10px;color:#333">Point Line</div>
<div class="a txt" style="left:42.5px;top:243px;font-size:10px;color:#333">Accumulate</div>
<div class="a txt" style="left:42.5px;top:279px;font-size:10px;color:#333">Angle</div>
<div class="a txt" style="left:42.5px;top:315px;font-size:10px;color:#333">Area</div>
<!-- TOOLTIP -->
<div class="a" style="left:109px;top:167px;width:237px;height:75.5px;background:#ececec;border:1px solid #dcdcdc;border-radius:2px;box-shadow:1px 1px 2px rgba(0,0,0,0.25)"></div>
<div class="a" style="left:111px;top:215px;width:230px;height:1px;background:#cfcfcf"></div>
<div class="a txt" style="left:116.5px;top:174px;font-size:12px;font-weight:bold;color:#5e5e5e">Point to Point</div>
<div class="a txt" style="left:116.5px;top:195.5px;font-size:11.3px;color:#666">Measures the distance between two points.</div>
<div class="a txt" style="left:116.5px;top:221.5px;font-size:11.3px;font-weight:bold;color:#5e5e5e">Press F1 for more help</div>
<!-- RED HIGHLIGHTS -->
<div class="a" style="left:114.5px;top:19.5px;width:65px;height:33.5px;border:2.4px solid #e8141c;border-radius:6px"></div>
<div class="a" style="left:5.5px;top:52px;width:150px;height:106.5px;border:2.2px solid #ee1a1a;border-radius:6px"></div>
</body></html>
